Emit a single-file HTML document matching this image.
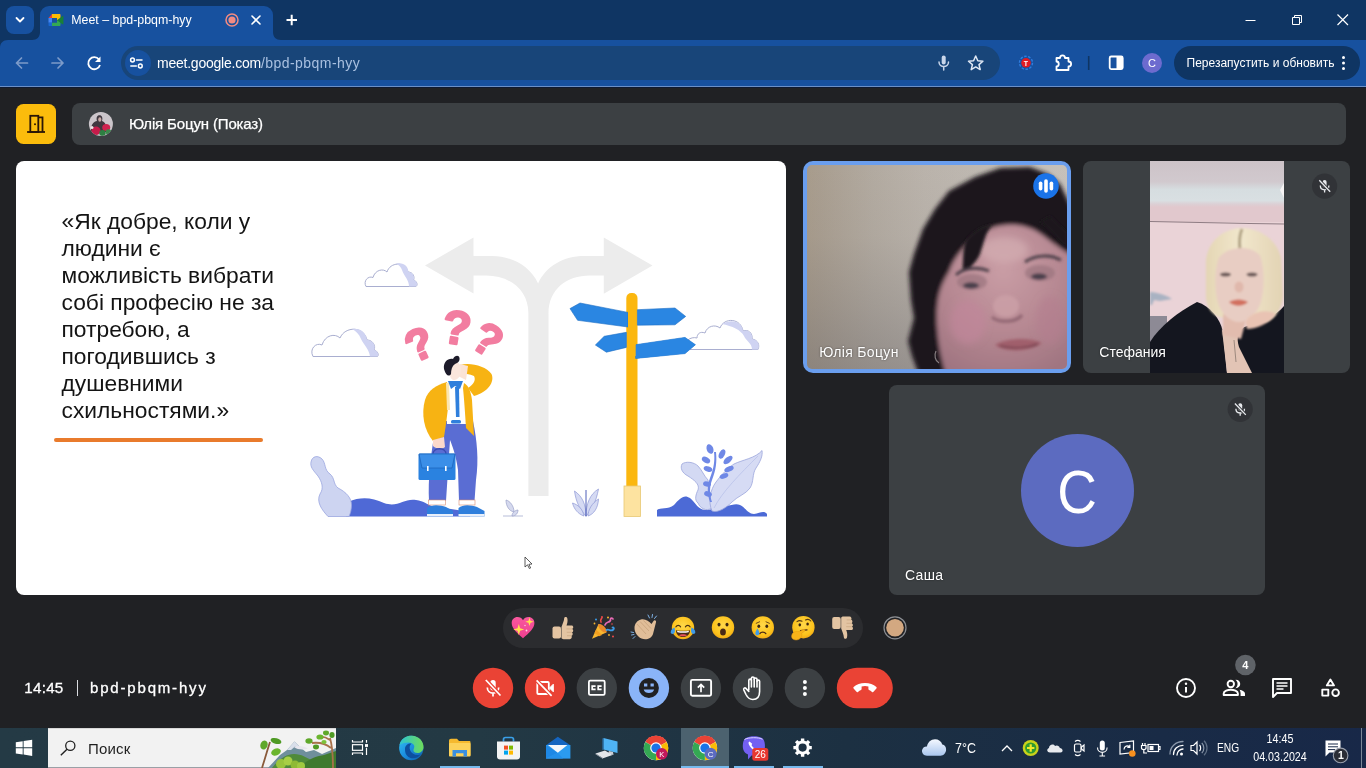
<!DOCTYPE html>
<html lang="uk">
<head>
<meta charset="utf-8">
<title>Meet – bpd-pbqm-hyy</title>
<style>
*{box-sizing:border-box;margin:0;padding:0}
html,body{width:1366px;height:768px;overflow:hidden;background:#202124;font-family:"Liberation Sans","DejaVu Sans",sans-serif;color:#fff}
.abs{position:absolute}
#root{position:relative;width:1366px;height:768px;overflow:hidden;will-change:transform}
/* browser chrome */
#titlebar{left:0;top:0;width:1366px;height:40px;background:#0f3563}
#toolbar{left:0;top:40px;width:1366px;height:46px;background:#17519f;border-radius:0}
#tbline{left:0;top:86px;width:1366px;height:2px;background:linear-gradient(#6c90c6 0,#6c90c6 50%,#0e1a33 50%,#0e1a33 100%)}
#tab{left:40px;top:6px;width:233px;height:34px;background:#17519f;border-radius:9px 9px 0 0}
#tabsearch{left:6px;top:6px;width:28px;height:28px;background:#17519f;border-radius:8px}
#tabtitle{left:71.200px;top:12px;font-size:12.4px;line-height:16px;color:#fff;white-space:nowrap}
#omni{left:121px;top:46px;width:879px;height:34px;border-radius:17px;background:#184579}
#omnichip{left:125px;top:50px;width:26px;height:26px;border-radius:13px;background:#17519f}
#url{left:157px;top:54px;font-size:14px;line-height:18px;color:#fff;white-space:nowrap;letter-spacing:-0.23px}
#url span{color:#a9c0e0;letter-spacing:0.45px}
#relaunch{left:1174px;top:46px;width:186px;height:34px;border-radius:17px;background:#0f3563}
#relaunch span{position:absolute;left:12.500px;top:9px;font-size:12px;line-height:16px;white-space:nowrap;color:#fff}
#avatarC{left:1142px;top:53px;width:20px;height:20px;border-radius:10px;background:#6d6bcf;font-size:11px;line-height:20px;text-align:center;color:#fff}
/* meet */
#leave{left:16px;top:104px;width:40px;height:40px;border-radius:7.5px;background:#fbbc0c}
#pbar{left:72px;top:103px;width:1274px;height:42px;border-radius:8px;background:#3c4043}
#pname{left:129px;top:115px;font-size:15px;line-height:18px;color:#fff;white-space:nowrap;letter-spacing:-0.150px;-webkit-text-stroke:0.250px #fff}
#slide{left:16px;top:161px;width:770px;height:434px;border-radius:8px;background:#fff;overflow:hidden}
#quote{left:45.500px;top:46.600px;width:260px;font-size:22.800px;line-height:27px;color:#141414;white-space:nowrap}
#uline{left:38.400px;top:277.200px;width:208.700px;height:3.600px;border-radius:2px;background:#e97b2c}
.tile{background:#3c4043;border-radius:8px;overflow:hidden}
#t1{left:803px;top:161px;width:268px;height:212px;border:5px solid #6a9eee;border-radius:10px;background:#c9bfae}
#t2{left:1083px;top:161px;width:267px;height:212px}
#t3{left:889px;top:385px;width:376px;height:210px}
.tname{position:absolute;z-index:3;font-size:14px;line-height:18px;color:#fff;white-space:nowrap;text-shadow:0 0 2px rgba(0,0,0,.5)}
#bigC{left:1020.500px;top:434px;width:113px;height:113px;border-radius:56.500px;background:#5c6bc0;color:#fff;font-size:61px;line-height:117px;text-align:center}
#bigC span{display:inline-block;transform:scaleX(0.900)}
.mutebadge{width:26px;height:26px;border-radius:13px;background:#2b2d30}
/* reactions */
#react{left:503px;top:608px;width:360px;height:40px;border-radius:20px;background:#2b2c2f}
/* bottom */
#clock{left:24.300px;top:679.400px;font-size:15.200px;line-height:18px;color:#fff;white-space:nowrap;letter-spacing:0.250px;-webkit-text-stroke:0.300px #fff}
#mcode{left:90px;top:679.200px;font-size:15px;line-height:18px;color:#fff;white-space:nowrap;letter-spacing:1.820px;-webkit-text-stroke:0.300px #fff}
.cb{width:40px;height:40px;border-radius:20px;background:#3c4043}
.cb.red{background:#ea4335}
/* taskbar */
#taskbar{left:0;top:728px;width:1366px;height:40px;background:linear-gradient(90deg,#243a45 0,#233944 35%,#1c3042 62%,#192b46 85%,#182848 100%)}
.tb{color:#fff;white-space:nowrap}
#search{left:48px;top:728px;width:288px;height:40px;background:#f2f2f2;border-top:1px solid #d8d8d8;border-bottom:1px solid #9aa0a6}
#search span{position:absolute;left:40px;top:10.600px;font-size:15px;line-height:18px;color:#1f1f1f;letter-spacing:0.200px}
</style>
</head>
<body>
<div id="root">
  <!-- CHROME -->
  <div id="titlebar" class="abs"></div>
  <div id="toolbar" class="abs"></div>
  <div id="tbline" class="abs"></div>
  <div id="tabsearch" class="abs"></div>
  <div id="tab" class="abs"></div>
  <div id="tabtitle" class="abs">Meet – bpd-pbqm-hyy</div>
  <div id="omni" class="abs"></div>
  <div id="omnichip" class="abs"></div>
  <div id="url" class="abs">meet.google.com<span>/bpd-pbqm-hyy</span></div>
  <div id="avatarC" class="abs">C</div>
  <div id="relaunch" class="abs"><span>Перезапустить и обновить</span></div>
  <svg class="abs" style="left:0;top:0" width="1366" height="88" viewBox="0 0 1366 88">
    <!-- tab outward curves -->
    <path d="M32 40 C37 40 40 37 40 32 L40 40 Z" fill="#17519f"/>
    <path d="M273 32 C273 37 276 40 281 40 L273 40 Z" fill="#17519f"/>
    <!-- toolbar top-left notch -->
    <path d="M0 40 L0 48 C0 43 3 40 8 40 Z" fill="#0f3563"/>
    <!-- tab search chevron -->
    <path d="M16.500 18 L20 21.500 L23.500 18" fill="none" stroke="#fff" stroke-width="1.800" stroke-linecap="round" stroke-linejoin="round"/>
    <!-- meet favicon -->
    <g>
      <path d="M48.500 18 L52 14 L52 18 Z" fill="#ea4335"/>
      <rect x="48.500" y="18" width="3.500" height="4.700" fill="#4285f4"/>
      <path d="M48.500 22.700 L52 22.700 L52 26 L49.500 26 C48.900 26 48.500 25.600 48.500 25 Z" fill="#1967d2"/>
      <path d="M52 14 L59.500 14 C60.100 14 60.500 14.400 60.500 15 L60.500 18.600 L57 21.200 L57 18 L52 18 Z" fill="#fbbc04"/>
      <path d="M52 22.700 L57 22.700 L57 19.800 L60.500 21.600 L60.500 25 C60.500 25.600 60.100 26 59.500 26 L52 26 Z" fill="#34a853"/>
      <path d="M57 20.200 L62.500 15.900 C62.900 15.600 63.400 15.800 63.400 16.300 L63.400 23.900 C63.400 24.400 62.900 24.600 62.500 24.300 Z" fill="#188038"/>
    </g>
    <!-- recording dot -->
    <circle cx="232" cy="20" r="6" fill="none" stroke="#f28b82" stroke-width="1.500"/>
    <circle cx="232" cy="20" r="3.600" fill="#f28b82"/>
    <!-- tab close -->
    <path d="M252 16 L260 24 M260 16 L252 24" stroke="#fff" stroke-width="1.600" stroke-linecap="round"/>
    <!-- new tab -->
    <path d="M286.500 20 L297 20 M291.700 14.700 L291.700 25.300" stroke="#fff" stroke-width="2"/>
    <!-- window controls -->
    <path d="M1245.500 20.500 L1255.500 20.500" stroke="#fff" stroke-width="1"/>
    <path d="M1292.500 17.500 L1299.500 17.500 L1299.500 24.500 L1292.500 24.500 Z M1294.500 17.500 L1294.500 15.500 L1301.500 15.500 L1301.500 22.500 L1299.500 22.500" fill="none" stroke="#fff" stroke-width="1"/>
    <path d="M1337.500 14.500 L1348 25 M1348 14.500 L1337.500 25" stroke="#fff" stroke-width="1.200"/>
    <!-- back / forward -->
    <g fill="none" stroke="#7d9bc9" stroke-width="1.700" stroke-linecap="round" stroke-linejoin="round">
      <path d="M27.500 63 L16.500 63 M21.500 58 L16.500 63 L21.500 68"/>
      <path d="M52 63 L63 63 M58 58 L63 63 L58 68"/>
    </g>
    <!-- reload -->
    <path d="M99 59.500 A6 6 0 1 0 100 65" fill="none" stroke="#fff" stroke-width="1.800"/>
    <path d="M100.500 56.500 L100.500 62 L95 62 Z" fill="#fff"/>
    <!-- tune icon -->
    <g stroke="#fff" stroke-width="1.500" fill="none" stroke-linecap="round">
      <circle cx="132.500" cy="60" r="1.900"/>
      <path d="M136.500 60 L142 60"/>
      <circle cx="140.300" cy="66" r="1.900"/>
      <path d="M130.800 66 L136.300 66"/>
    </g>
    <!-- mic in omnibox -->
    <g fill="none" stroke="#c9d6ea" stroke-width="1.500" stroke-linecap="round">
      <rect x="941.700" y="55.500" width="4" height="9" rx="2" fill="#c9d6ea" stroke="none"/>
      <path d="M939 62 C939 68 948.500 68 948.500 62 M943.700 66.700 L943.700 70"/>
    </g>
    <!-- star -->
    <path d="M975.700 56 L977.800 60.700 L982.900 61.200 L979 64.600 L980.200 69.600 L975.700 66.900 L971.200 69.600 L972.400 64.600 L968.500 61.200 L973.600 60.700 Z" fill="none" stroke="#dfe8f5" stroke-width="1.500" stroke-linejoin="round"/>
    <!-- extension red T -->
    <circle cx="1026" cy="62.800" r="6.500" fill="none" stroke="#2f7de0" stroke-width="1.400" stroke-dasharray="2.500 1.500"/>
    <circle cx="1026" cy="62.800" r="4.800" fill="#e01b24"/>
    <text x="1026" y="65.500" font-size="7" font-weight="700" fill="#fff" text-anchor="middle" font-family="'Liberation Sans',sans-serif">T</text>
    <!-- puzzle -->
    <path d="M1056.500 58 L1060 58 C1060 54.500 1065 54.500 1065 58 L1068.500 58 L1068.500 61.500 C1072 61.500 1072 66.500 1068.500 66.500 L1068.500 70 L1056.500 70 L1056.500 66.500 C1059.500 66.500 1059.500 61.500 1056.500 61.500 Z" fill="none" stroke="#fff" stroke-width="1.800" stroke-linejoin="round"/>
    <!-- separator -->
    <path d="M1088.700 56 L1088.700 70" stroke="#0f3563" stroke-width="1.600"/>
    <!-- side panel -->
    <rect x="1109.700" y="56.500" width="13" height="12.600" rx="1.500" fill="none" stroke="#fff" stroke-width="1.800"/>
    <rect x="1116.500" y="56.500" width="6.200" height="12.600" fill="#fff"/>
    <!-- 3 dots -->
    <circle cx="1343.500" cy="57.500" r="1.500" fill="#fff"/>
    <circle cx="1343.500" cy="63" r="1.500" fill="#fff"/>
    <circle cx="1343.500" cy="68.500" r="1.500" fill="#fff"/>
  </svg>

  <!-- MEET TOP -->
  <div id="leave" class="abs"></div>
  <div id="pbar" class="abs"></div>
  <div id="pname" class="abs">Юлія Боцун (Показ)</div>
  <svg class="abs" style="left:0;top:96px" width="140" height="56" viewBox="0 96 140 56">
    <defs><clipPath id="avc"><circle cx="100.900" cy="124" r="12"/></clipPath>
    <filter id="b1" x="-20%" y="-20%" width="140%" height="140%"><feGaussianBlur stdDeviation="0.700"/></filter></defs>
    <!-- door icon -->
    <g fill="none" stroke="#2b1606" stroke-width="1.800">
      <rect x="30.300" y="115.800" width="8" height="16.200"/>
      <path d="M38.300 117.300 L42.500 117.300 L42.500 132"/>
      <path d="M27.100 132 L45 132"/>
    </g>
    <circle cx="35" cy="124.200" r="1" fill="#2b1606"/>
    <!-- small avatar (abstract photo) -->
    <g clip-path="url(#avc)">
      <rect x="88" y="111" width="26" height="26" fill="#cbc5ca"/>
      <g filter="url(#b1)">
        <path d="M91 130 C91 124 94 121.500 97 121 C96 118 97 115.300 99.500 115.300 C102 115.300 103 118 102 121 C105 122 106 124.500 106 127 L106 132 L91 132 Z" fill="#3f373f"/>
        <ellipse cx="99.800" cy="119.500" rx="1.600" ry="2.200" fill="#c9aaa6"/>
        <ellipse cx="96" cy="130.800" rx="4.600" ry="4.200" fill="#c61f4b"/>
        <ellipse cx="106.200" cy="127.500" rx="4" ry="3.600" fill="#cf2450"/>
        <ellipse cx="102.500" cy="133" rx="3.200" ry="3" fill="#2f7f43"/>
        <ellipse cx="108.500" cy="132" rx="2.800" ry="2.800" fill="#3b8a4c"/>
        <ellipse cx="92" cy="127.500" rx="1.500" ry="1.500" fill="#f1e9ea"/>
      </g>
    </g>
  </svg>

  <!-- SLIDE -->
  <div id="slide" class="abs">
    <div id="quote" class="abs">«Як добре, коли у<br>людини є<br>можливість вибрати<br>собі професію не за<br>потребою, а<br>погодившись з<br>душевними<br>схильностями.»</div>
    <div id="uline" class="abs"></div>
    <svg class="abs" style="left:0;top:0" width="770" height="434" viewBox="16 161 770 434">
      <!-- grey direction arrows -->
      <g fill="#ececec">
        <path d="M425 265.500 L473.500 237.500 L473.500 256 L492 256 C512 256 530 266 538.100 283.400 C546 266 564 256 584 256 L603.800 256 L603.800 237.500 L652.500 265.500 L603.800 293.800 L603.800 275.600 L590 275.600 C566 275.600 548.500 290 548.500 313.300 L548.500 496 L528.400 496 L528.400 313.300 C528.400 290 510 275.600 486 275.600 L473.500 275.600 L473.500 293.500 Z"/>
      </g>
      <!-- clouds -->
      <g fill="#fff" stroke="#a9aed0" stroke-width="1">
        <path d="M366 286.5 C363 281 368 275.5 373 277.5 C375 270 383 268 387 272 C390 262 405 261 408 272 C413 272 415 277 413.5 280 C417 281 418 285 416 286.5 Z"/>
        <path d="M313 356.500 C309 349 316 342 322 345 C325 335 335 333 340 338 C345 326 364 326 367 340 C373 340 376 346 374 350 C378 351 379 355 377.500 356.500 Z"/>
        <path d="M690 349.500 L700 349.500 L758 349.500 C760 345 758 340 752 339 C753 333 748 329 743 331 C741 318 724 317 720 328 C715 324 707 326 705 333 C700 331 697 334 697 338 C694 337 690 338 688 340"/>
      </g>
      <g fill="#cfd3f2" stroke="none">
        <path d="M396 263.500 C404 262 408 266 408.500 272 C413 272 415 277 413.500 280 C417 281 418 285 416 286.500 L409 286.500 C409 280 404 276 402 270 C401 267 399 265 396 263.500 Z"/>
        <path d="M352 329 C361 328 366 333 367 340 C373 340 376 346 374 350 C378 351 379 355 377.500 356.500 L370 356.500 C369 349 364 345 361 339 C359 334 356 331 352 329 Z"/>
        <path d="M722 324 C732 318 742 322 743 331 C748 329 753 333 752 339 C758 340 760 345 758 349.500 L752 349.500 C752 343 746 341 744 336 C741 330 732 326 722 324 Z"/>
      </g>
      <!-- question marks -->
      <g fill="#f27da0" stroke="#f27da0" stroke-width="2.200" stroke-linejoin="round" font-family="'Liberation Sans','DejaVu Sans',sans-serif" font-weight="700" font-size="44" text-anchor="middle">
        <text transform="translate(419 343.500) rotate(-24)" x="0" y="15.800">?</text>
        <text transform="translate(456.800 327) rotate(9)" x="0" y="17" font-size="47">?</text>
        <text transform="translate(488 339) rotate(32)" x="0" y="15.800">?</text>
      </g>
      <!-- left leaf + ground -->
      <path d="M348 502 C362 496 372 498 384 503 C398 508 404 498 416 500 C424 501 428 505 432 506 L470 512 L470 516.500 L346 516.500 Z" fill="#4f69d6"/>
      <path d="M311 462 C312 456 318 455 322 459 C326 463 324 470 330 474 C335 478 333 484 338 488 C346 492 352 498 351.500 506 C351 512 350 514 349 516.500 L328 516.500 C322 510 316 502 320 494 C324 488 322 482 318 476 C313 470 310 467 311 462 Z" fill="#cdd4f1" stroke="#9aa6e0" stroke-width="0.8"/>
      <!-- man -->
      <g>
        <!-- pants -->
        <path d="M437 421 L473 421 C477 440 479 460 476 480 L474.500 501 L459 501 L458 470 C456 455 452 445 450 440 L446 501 L429 501 C428 480 430 455 437 421 Z" fill="#5a6dd3"/>
        <!-- socks -->
        <rect x="428.500" y="500" width="17" height="5" fill="#fff" stroke="#d98c70" stroke-width="0.6"/>
        <rect x="459" y="500" width="16" height="5" fill="#fff" stroke="#d98c70" stroke-width="0.6"/>
        <!-- shoes -->
        <path d="M427 516.500 L427 508 C432 504 440 505 446 507 L453 511 L453 516.500 Z" fill="#2f7fdc"/>
        <path d="M458.500 516.500 L458.500 508 C463 504 471 505 477 507 L484.500 511 L484.500 516.500 Z" fill="#2f7fdc"/>
        <rect x="427" y="514" width="26" height="2.500" fill="#e9f0fb"/>
        <rect x="458.500" y="514" width="26" height="2.500" fill="#e9f0fb"/>
        <!-- shirt -->
        <path d="M446 382 L465 382 L466 424 L447 424 Z" fill="#fff"/>
        <!-- raised arm -->
        <path d="M460 365 C470 362 486 366 491.500 374 C495 382 488 392 474 396 L468 388 C474 384 476 380 474 376 C470 374 464 374 460 372 Z" fill="#f7b313"/>
        <path d="M460 364 L468 366 L466 380 L458 376 Z" fill="#fbe3d6"/>
        <!-- jacket left -->
        <path d="M447 382 C436 385 428 390 425 400 C421 414 424 430 433 441 L444 437 C446 425 448 410 449 396 Z" fill="#f7b313"/>
        <path d="M464 383 C469 386 471 392 472 400 L474 436 L466 428 C465 412 464 398 463 388 Z" fill="#f7b313"/>
        <path d="M446 383 L449 383 L450 410 L447 410 Z" fill="#fbe6b0"/>
        <!-- collar + tie -->
        <path d="M448 381 L463 381 L460 389 L455 386 L451 389 Z" fill="#2f7fdc"/>
        <path d="M455 387 L459 387 L459.500 417 L456 417 Z" fill="#2f7fdc"/>
        <rect x="451" y="420" width="10" height="3.500" rx="1.500" fill="#2f7fdc"/>
        <!-- head -->
        <path d="M450 363 C456 360 461 363 461 369 C461 376 458 380 454 380 C450 380 448 373 450 363 Z" fill="#fbe6dc"/>
        <path d="M444 369 C443 362 448 358 453 359 C455 355 459 355 459.500 358 C460 361 458 363 455 364 C452 366 451 370 451 374 C449 377 446 376 444 369 Z" fill="#1d1b2a"/>
        <!-- hand -->
        <path d="M433 440 L444 437 L445 447 C442 450 436 449 433 446 Z" fill="#fbd9cb"/>
        <!-- briefcase -->
        <path d="M433 454 C433 447 446 447 446 454" fill="none" stroke="#3b4bb0" stroke-width="1.500"/>
        <rect x="418.500" y="453.500" width="37" height="26.500" rx="1.500" fill="#2a82e0"/>
        <path d="M419 454 L455 454 L452 468 L422 468 Z" fill="#3b8fe8" stroke="#1b62b8" stroke-width="0.700"/>
        <rect x="427" y="466" width="1.600" height="5" fill="#fff"/>
        <rect x="445" y="466" width="1.600" height="5" fill="#fff"/>
      </g>
      <!-- small plant -->
      <g fill="#d5d9ee" stroke="#9aa0c8" stroke-width="0.700">
        <path d="M506 500 C510 501 514 506 514 512 C509 511 506 506 506 500 Z"/>
        <path d="M503 516 L523 516"/>
        <path d="M512 516 C512 512 516 510 518 510 C518 513 516 516 512 516 Z"/>
      </g>
      <!-- center plant -->
      <g fill="#d5daf3" stroke="#8e98d6" stroke-width="0.700">
        <path d="M586 516 C580 510 576 502 574.500 491 C582 496 586 504 586 516 Z"/>
        <path d="M586 516 C592 510 596 502 598.500 489 C590 494 586 504 586 516 Z"/>
        <path d="M584 516 C578 514 574 509 572.500 503 C579 505 583 510 584 516 Z"/>
        <path d="M588 516 C594 514 598 508 598.500 499 C592 503 588 510 588 516 Z"/>
        <path d="M586 516.500 L586 490" stroke="#4f5fb8" stroke-width="1"/>
      </g>
      <!-- sign post -->
      <rect x="626.300" y="293" width="11.200" height="200" rx="5" fill="#fbb70f"/>
      <rect x="624" y="486" width="16.500" height="30.500" fill="#fde3a0" stroke="#e8c873" stroke-width="0.800"/>
      <g fill="#2a86e2" stroke="#1f6fc4" stroke-width="0.600">
        <path d="M570 308.600 L580 303 L628 312.400 L628 327 L577.600 320.300 Z"/>
        <path d="M637.400 309.700 L675 308 L685.700 316.400 L675 324.800 L637.400 325.200 Z"/>
        <path d="M595.400 345 L604.200 336.300 L626.400 332.300 L626.400 347.400 L606.400 352.200 Z"/>
        <path d="M635.700 344.700 L685 337.400 L695.400 344.700 L685 353.600 L635.700 358.400 Z"/>
      </g>
      <rect x="628" y="296" width="8" height="60" fill="#fbb70f"/>
      <path d="M635.700 344.700 L685 337.400 L695.400 344.700 L685 353.600 L635.700 358.400 Z" fill="#2a86e2"/>
      <!-- right plants -->
      <path d="M657 516.500 L657 510 C660 507 668 510 674 505 C680 498 684 494 690 498 C696 503 698 510 706 510 C712 510 718 506 726 506 C732 505 736 503 740 505 C746 508 748 514 754 514 C760 513 764 510 767 514 L767 516.500 Z" fill="#4c6ad6"/>
      <path d="M682 464 C686 461 694 462 698 466 C702 470 704 476 708 480 L712 508 C706 512 700 508 698 503 C694 500 696 494 698 490 C700 484 694 480 688 476 C682 473 680 468 682 464 Z" fill="#d3d9f3" stroke="#9ca6dc" stroke-width="0.800"/>
      <path d="M762 450.500 C763 456 760 462 756 468 C752 474 754 482 750 488 C746 494 738 496 732 502 C726 508 718 513 712 511 C708 502 710 490 716 482 C722 474 728 468 734 464 C742 460 756 458 762 450.500 Z" fill="#d6dbf4" stroke="#9ca6dc" stroke-width="0.800"/>
      <path d="M714 508 C722 492 740 474 758 456" fill="none" stroke="#b9c1ea" stroke-width="0.800"/>
      <g fill="#6f88e6">
        <ellipse cx="710" cy="449" rx="3.300" ry="5" transform="rotate(-20 710 449)"/>
        <ellipse cx="722" cy="454" rx="2.800" ry="5" transform="rotate(25 722 454)"/>
        <ellipse cx="728" cy="460" rx="2.800" ry="5.500" transform="rotate(50 728 460)"/>
        <ellipse cx="706" cy="460" rx="2.800" ry="4.500" transform="rotate(-60 706 460)"/>
        <ellipse cx="729" cy="469" rx="2.600" ry="5" transform="rotate(65 729 469)"/>
        <ellipse cx="708" cy="469" rx="2.600" ry="4.500" transform="rotate(-70 708 469)"/>
        <ellipse cx="724" cy="476" rx="2.400" ry="4.500" transform="rotate(70 724 476)"/>
        <ellipse cx="707" cy="484" rx="2.600" ry="4" transform="rotate(-75 707 484)"/>
        <ellipse cx="708" cy="494" rx="2.600" ry="4" transform="rotate(-70 708 494)"/>
        <path d="M716 452 C717 462 716 470 712 480 C709 488 710 496 712 502 L710 502 C707 494 707 486 710 478 C714 468 715 460 714 452 Z"/>
      </g>
      <!-- cursor -->
      <path d="M525 557 L525 567 L527.500 564.800 L529.300 568.500 L530.600 568 L528.900 564.300 L532 564 Z" fill="#fff" stroke="#333" stroke-width="0.800"/>
    </svg>
  </div>

  <!-- TILES -->
  <div id="t1" class="abs tile"></div>
  <div id="t2" class="abs tile"></div>
  <div id="t3" class="abs tile"></div>
  <div id="bigC" class="abs"><span>C</span></div>

  <svg class="abs" style="left:800px;top:158px" width="560" height="440" viewBox="800 158 560 440">
    <defs>
      <clipPath id="c1"><rect x="807" y="165" width="260" height="204" rx="5"/></clipPath>
      <clipPath id="c2"><rect x="1150" y="161" width="134" height="212"/></clipPath>
      <filter id="bl2" x="-10%" y="-10%" width="120%" height="120%"><feGaussianBlur stdDeviation="2"/></filter>
      <filter id="bl3" x="-20%" y="-20%" width="140%" height="140%"><feGaussianBlur stdDeviation="3.500"/></filter>
      <filter id="bl15" x="-10%" y="-10%" width="120%" height="120%"><feGaussianBlur stdDeviation="1.700"/></filter>
      <filter id="bl1" x="-10%" y="-10%" width="120%" height="120%"><feGaussianBlur stdDeviation="1.100"/></filter>
      <linearGradient id="wall1" x1="0" y1="0" x2="1" y2="0"><stop offset="0" stop-color="#a89c8c"/><stop offset="0.050" stop-color="#a99e90"/><stop offset="0.250" stop-color="#b2aaa0"/><stop offset="0.450" stop-color="#bab3ab"/><stop offset="1" stop-color="#c6c1bb"/></linearGradient>
      <linearGradient id="wall1b" x1="0" y1="0" x2="0" y2="1"><stop offset="0" stop-color="#5c5a60" stop-opacity="0"/><stop offset="0.350" stop-color="#5c5a60" stop-opacity="0.040"/><stop offset="0.700" stop-color="#5c5a60" stop-opacity="0.200"/><stop offset="1" stop-color="#5c5a60" stop-opacity="0.360"/></linearGradient>
      <radialGradient id="skin1" cx="0.480" cy="0.300" r="0.750"><stop offset="0" stop-color="#c99da5"/><stop offset="0.550" stop-color="#b68892"/><stop offset="1" stop-color="#a07581"/></radialGradient>
      <linearGradient id="ceil2" x1="0" y1="0" x2="0" y2="1"><stop offset="0" stop-color="#cdc3c8"/><stop offset="0.450" stop-color="#d1c9ce"/><stop offset="0.620" stop-color="#d6dde0"/><stop offset="0.860" stop-color="#d9dfe2"/><stop offset="0.940" stop-color="#dccfd4"/><stop offset="1" stop-color="#e1c8cd"/></linearGradient>
      <linearGradient id="hair2" x1="0" y1="0" x2="1" y2="0"><stop offset="0" stop-color="#e4d6b4"/><stop offset="0.450" stop-color="#f1e7cc"/><stop offset="1" stop-color="#e2d3b3"/></linearGradient>
    </defs>
    <!-- tile 1: webcam frame (abstract colour regions) -->
    <g clip-path="url(#c1)">
      <rect x="807" y="165" width="260" height="204" fill="url(#wall1)"/>
      <rect x="807" y="165" width="260" height="204" fill="url(#wall1b)"/>
      <g filter="url(#bl2)">
        <path d="M1075 215 L1060 184 L1048 174 L1030 167 L1000 168 L975 177 L949 191 L935 209 L923 229 L914 254 L909 272 L911 300 L914 318 L908 341 L912 356 L919 375 L1075 375 Z" fill="#1b191d"/>
        <path d="M949 272 C955 255 968 241 985 231 C1000 223 1018 223 1032 229 C1045 235 1055 247 1075 257 L1075 375 L946 375 C938 350 935 320 938 300 C940 288 944 280 949 272 Z" fill="url(#skin1)"/>
      </g>
      <g filter="url(#bl3)">
        <ellipse cx="1004" cy="250" rx="24" ry="13" fill="#d4aeb2" opacity="0.700"/>
        <ellipse cx="968" cy="322" rx="18" ry="22" fill="#c0869a" opacity="0.700"/>
        <ellipse cx="1050" cy="320" rx="14" ry="24" fill="#b47e90" opacity="0.600"/>
      </g>
      <g filter="url(#bl15)">
        <path d="M966 240 C972 232 982 226 992 224 C986 232 984 242 980 254 C976 263 970 268 962 272 C964 262 962 250 966 240 Z" fill="#1b191d"/>
        <path d="M1040 222 C1050 228 1058 240 1067 248 L1067 232 L1050 216 Z" fill="#1b191d"/>
        <ellipse cx="972" cy="282" rx="15" ry="8" fill="#9a747e" opacity="0.700"/>
        <ellipse cx="1040" cy="273" rx="15" ry="8" fill="#9a747e" opacity="0.700"/>
        <path d="M956 275 C963 268 978 266 989 271" fill="none" stroke="#4a3c46" stroke-width="3"/>
        <path d="M1025 262 C1035 255 1050 254 1061 260" fill="none" stroke="#4a3c46" stroke-width="3"/>
        <ellipse cx="971" cy="285.500" rx="8" ry="3" fill="#463c4a"/>
        <ellipse cx="1039" cy="276.500" rx="8" ry="3" fill="#463c4a"/>
        <ellipse cx="1006" cy="306" rx="13" ry="11" fill="#cca0a8" opacity="0.800"/>
        <path d="M992 317 C998 323 1016 323 1022 315" fill="none" stroke="#8e6470" stroke-width="3"/>
        <path d="M995 345 C1006 338 1030 337 1042 343 C1030 352 1006 353 995 345 Z" fill="#a05f6c"/>
        <path d="M1000 346 C1012 349 1028 348 1038 344" fill="none" stroke="#6e3c4a" stroke-width="1.500"/>
      </g>
      <path d="M936 351 C934 355 935 361 939 363" fill="none" stroke="#d8d0cf" stroke-width="1.200" opacity="0.550"/>
    </g>
    <!-- speaking indicator -->
    <circle cx="1046" cy="186" r="12.800" fill="#1a73e8"/>
    <rect x="1038.800" y="181.500" width="3.600" height="9" rx="1.800" fill="#fff"/>
    <rect x="1044.200" y="179.200" width="3.600" height="13.600" rx="1.800" fill="#fff"/>
    <rect x="1049.600" y="181.500" width="3.600" height="9" rx="1.800" fill="#fff"/>
    <!-- tile 2: portrait webcam frame (abstract colour regions) -->
    <g clip-path="url(#c2)">
      <rect x="1150" y="161" width="134" height="212" fill="#ead3d7"/>
      <rect x="1150" y="205" width="134" height="17" fill="#e1c8cd"/>
      <rect x="1150" y="161" width="134" height="46" fill="url(#ceil2)"/>
      <path d="M1150 221.500 L1250 223.500 L1284 224" stroke="#8f7d84" stroke-width="1.200" fill="none"/>
      <path d="M1280 190 L1284 183 L1284 198 Z" fill="#f6f3f4"/>
      <path d="M1150 292 C1158 292.500 1166 295 1172 299 L1160 301 L1154 300 L1152 305 L1150 305 Z" fill="#a9b2c2" filter="url(#bl1)"/>
      <rect x="1150" y="316" width="17" height="30" fill="#8d8a95"/>
      <path d="M1150 342 C1160 326 1178 312 1197 302 C1210 306 1220 318 1223 332 L1227 373 L1150 373 Z" fill="#14161f"/>
      <path d="M1222 330 L1242 336 L1254 373 L1227 373 Z" fill="#e2c4b5"/>
      <path d="M1284 306 C1277 315 1262 322 1247 326 C1238 329 1236 337 1239 347 L1252 373 L1284 373 Z" fill="#14161f"/>
      <g filter="url(#bl1)">
        <path d="M1241 228 C1222 229 1208 242 1206 260 L1206 298 C1207 308 1212 314 1219 317 L1266 322 C1276 318 1282 308 1283 296 L1281 258 C1277 240 1260 228 1241 228 Z" fill="url(#hair2)"/>
        <path d="M1242 229 C1239 236 1239 242 1240 250" stroke="#8d7c5c" stroke-width="3" fill="none" opacity="0.650"/>
        <path d="M1223 314 L1246 320 L1241 339 L1223 335 Z" fill="#e2bcae"/>
        <path d="M1221 258 C1228 246 1250 244 1258 256 C1262 270 1262 290 1258 304 C1254 316 1246 322 1239 322 C1231 322 1223 314 1220 302 C1217 288 1217 270 1221 258 Z" fill="#e8cdc3" transform="translate(1239 285) scale(1.120 1) translate(-1239 -285)"/>
        <ellipse cx="1225.500" cy="274.500" rx="5.500" ry="2.100" fill="#6b5856"/>
        <ellipse cx="1252" cy="274.500" rx="5.500" ry="2.100" fill="#6b5856"/>
        <ellipse cx="1239" cy="287" rx="4.500" ry="5.500" fill="#e0b8ac"/>
        <path d="M1229 302 C1234 298.500 1243 298.500 1248 302 C1243 307 1234 307 1229 302 Z" fill="#d2705e"/>
      </g>
      <path d="M1245 322 C1250 312 1266 308 1276 314 C1270 323 1256 329 1247 329 Z" fill="#e9c3b3" filter="url(#bl1)"/>
      <path d="M1234 340 L1236 362" stroke="#8a7a70" stroke-width="0.800"/>
    </g>
    <!-- mute badges -->
    <g id="mb" transform="translate(-0.400 0.600)">
      <circle cx="1325" cy="185.500" r="12.600" fill="#313337"/>
      <rect x="1323" y="179.500" width="4" height="7.500" rx="2" fill="#e8eaed"/>
      <path d="M1320.700 185 C1320.700 190.600 1329.300 190.600 1329.300 185 M1325 189.300 L1325 192" fill="none" stroke="#e8eaed" stroke-width="1.300"/>
      <path d="M1319.300 179.300 L1331 191.500" stroke="#313337" stroke-width="3"/>
      <path d="M1319.700 179.700 L1330.600 191.100" stroke="#e8eaed" stroke-width="1.300"/>
    </g>
    <use href="#mb" x="-84.400" y="223.200"/>
  </svg>
  <div class="tname" style="left:819.300px;top:342.850px;letter-spacing:0.350px">Юлія Боцун</div>
  <div class="tname" style="left:1099.300px;top:342.850px">Стефания</div>
  <div class="tname" style="left:905px;top:566.200px;letter-spacing:0.300px">Саша</div>
  <!-- REACTIONS -->
  <div id="react" class="abs"></div>
  <svg class="abs" style="left:500px;top:606px" width="420" height="44" viewBox="500 606 420 44">
    <defs>
      <radialGradient id="fy" cx="50%" cy="40%" r="60%"><stop offset="0" stop-color="#ffd84a"/><stop offset="0.750" stop-color="#fcc21b"/><stop offset="1" stop-color="#f0a818"/></radialGradient>
      <linearGradient id="hp" x1="0" y1="0" x2="0" y2="1"><stop offset="0" stop-color="#f9589e"/><stop offset="1" stop-color="#ee3f8f"/></linearGradient>
    </defs>
    <!-- 1 sparkling heart -->
    <g>
      <path d="M523 638.200 C517 633 511.700 628.500 511.700 623 C511.700 619.500 514.300 617 517.500 617 C519.800 617 521.900 618.200 523 620.200 C524.100 618.200 526.200 617 528.500 617 C531.700 617 534.400 619.500 534.400 623 C534.400 628.500 529 633 523 638.200 Z" fill="url(#hp)"/>
      <path d="M529.500 617.500 L530.500 620.800 L533.800 621.800 L530.500 622.800 L529.500 626.100 L528.500 622.800 L525.200 621.800 L528.500 620.800 Z" fill="#ffe14d"/>
      <path d="M518.800 624 L520.100 628.200 L524.300 629.500 L520.100 630.800 L518.800 635 L517.500 630.800 L513.300 629.500 L517.500 628.200 Z" fill="#ffe14d"/>
      <circle cx="526.500" cy="630.500" r="0.900" fill="#ffd0e6"/><circle cx="525" cy="625.500" r="0.700" fill="#ffd0e6"/>
    </g>
    <!-- 2 thumbs up -->
    <g fill="#e3c4a2">
      <path d="M561.500 627 C562.500 624 564 621 564.200 618.200 C564.300 616.600 566.800 616.300 567.300 618.200 C568 621 567.200 623.500 566.500 625.500 L571.500 625.500 C573.600 625.500 573.900 628.300 572.200 628.900 C573.700 629.500 573.500 632 572 632.400 C573.200 633.200 572.900 635.400 571.500 635.800 C572.300 637 571.500 639.200 569.800 639.200 L563.500 639.200 C562.500 639.200 561.800 638.600 561.500 638 Z"/>
      <rect x="552.500" y="626.500" width="8.500" height="12" rx="2"/>
      <path d="M566.500 628.900 L572 628.900 M566.800 632.300 L571.800 632.300 M567 635.700 L571.200 635.700" stroke="#c9a680" stroke-width="0.700" fill="none"/>
    </g>
    <!-- 3 party popper -->
    <g>
      <path d="M592 638.800 L598.500 624 C601 624.500 605.500 629 606.500 632.500 Z" fill="#f7b731"/>
      <path d="M594.500 633 L596 629.600 L602 635 L599 636.200 Z" fill="#f29f1f"/>
      <ellipse cx="602.500" cy="628.200" rx="5.600" ry="2.400" transform="rotate(45 602.500 628.200)" fill="#e98a2a"/>
      <path d="M601 622 C599 619.500 603 618.500 602 616.800" fill="none" stroke="#ef4b4b" stroke-width="1.700" stroke-linecap="round"/>
      <path d="M605 625 C606 621 611 623 610.500 619.500 C610.200 617.800 612.500 617.500 613 619" fill="none" stroke="#e86bb5" stroke-width="1.700" stroke-linecap="round"/>
      <path d="M606.500 630 C609 628 610 632.500 613.500 629.500 C614.500 628.600 613.500 627 612.500 627.500" fill="none" stroke="#3b9be8" stroke-width="1.700" stroke-linecap="round"/>
      <circle cx="596" cy="619.500" r="1" fill="#3b9be8"/><circle cx="608" cy="617.500" r="1" fill="#f7b731"/>
      <circle cx="613" cy="636.500" r="1" fill="#ef4b4b"/><circle cx="609" cy="635" r="0.900" fill="#f7b731"/>
      <circle cx="594.500" cy="623.500" r="0.900" fill="#f7b731"/><circle cx="612" cy="624" r="0.800" fill="#ef4b4b"/>
    </g>
    <!-- 4 clap -->
    <g>
      <path d="M634.500 628 C634.500 624 637 620.500 641 619.500 C645 618.500 649 621 651.500 624 L653.500 621 C654.500 619.500 656.500 620.500 656 622.200 L653 634 C651.500 638.500 646 640.500 641.500 638.500 C637 636.500 634.500 632 634.500 628 Z" fill="#e0bd98"/>
      <path d="M637 624 L646 634 M640 621.500 L649 631 M643.500 620.500 L651 628.500" stroke="#c39d77" stroke-width="0.700" fill="none"/>
      <path d="M649.500 618 L648 615 M652 617.500 L652.500 614.500 M654.500 618.500 L656.500 616" stroke="#7fb2e6" stroke-width="1" stroke-linecap="round"/>
      <path d="M634 634.500 L631.500 635 M635 636.500 L633 638.500 M633.500 632.500 L631 632" stroke="#7fb2e6" stroke-width="1" stroke-linecap="round"/>
    </g>
    <!-- 5 joy -->
    <g>
      <circle cx="683" cy="628" r="11.200" fill="url(#fy)"/>
      <path d="M676 626.800 C677 624.800 679.500 624.800 680.500 626.800 M685.500 626.800 C686.500 624.800 689 624.800 690 626.800" fill="none" stroke="#4a3212" stroke-width="1.300" stroke-linecap="round"/>
      <path d="M676 630.200 C678 630.900 688 630.900 690 630.200 C690 634.500 687 637 683 637 C679 637 676 634.500 676 630.200 Z" fill="#4a2a16"/>
      <path d="M677 630.800 C680 631.500 686 631.500 689 630.800 L688.600 632.300 C685 633 681 633 677.400 632.300 Z" fill="#fff"/>
      <path d="M679 635.200 C681 634 685 634 687 635.200 C685.500 636.600 680.500 636.600 679 635.200 Z" fill="#e8505b"/>
      <path d="M674.500 627.500 C672.500 628.200 670.500 630.200 670.700 632.500 C671 634.500 673.800 634.400 674.600 632.500 C675.200 631 675 629 674.500 627.500 Z" fill="#3f9be8"/>
      <path d="M691.500 627.500 C693.500 628.200 695.500 630.200 695.300 632.500 C695 634.500 692.200 634.400 691.400 632.500 C690.800 631 691 629 691.500 627.500 Z" fill="#3f9be8"/>
    </g>
    <!-- 6 open mouth -->
    <g>
      <circle cx="723" cy="627.400" r="11.200" fill="url(#fy)"/>
      <ellipse cx="719" cy="624.600" rx="1.500" ry="1.900" fill="#3a2510"/>
      <ellipse cx="727" cy="624.600" rx="1.500" ry="1.900" fill="#3a2510"/>
      <ellipse cx="723" cy="632" rx="2.900" ry="3.500" fill="#4a2a16"/>
    </g>
    <!-- 7 cry -->
    <g>
      <circle cx="762.800" cy="627.400" r="11.200" fill="url(#fy)"/>
      <ellipse cx="758.800" cy="626.200" rx="1.400" ry="1.700" fill="#3a2510"/>
      <ellipse cx="766.800" cy="626.200" rx="1.400" ry="1.700" fill="#3a2510"/>
      <path d="M756.200 623.300 L759.600 621.800 M769.400 623.300 L766 621.800" stroke="#6a4a1a" stroke-width="1" stroke-linecap="round"/>
      <path d="M759.800 633.600 C761 631.600 764.600 631.600 765.800 633.600" fill="none" stroke="#4a2a16" stroke-width="1.300" stroke-linecap="round"/>
      <path d="M757.500 628.500 C759 631 760 633 759 634.500 C758 636 755.500 635.500 755.300 633.500 C755.200 631.800 756.500 630 757.500 628.500 Z" fill="#3f9be8"/>
    </g>
    <!-- 8 think -->
    <g>
      <circle cx="803.400" cy="627.200" r="11.200" fill="url(#fy)"/>
      <ellipse cx="799.800" cy="624.800" rx="1.300" ry="1.600" fill="#3a2510"/>
      <ellipse cx="807.600" cy="624" rx="1.300" ry="1.600" fill="#3a2510"/>
      <path d="M797 621.600 C798.500 620.400 800.500 620.400 802 621.200 M805.500 620 C807 619.200 809.500 619.500 810.800 621" fill="none" stroke="#5a3c14" stroke-width="1.100" stroke-linecap="round"/>
      <path d="M800.500 630.600 L807 629.800" stroke="#4a2a16" stroke-width="1.300" stroke-linecap="round"/>
      <path d="M792.500 633.500 C794 631.500 797 631 799.500 631.500 L803.500 629.500 C804.800 629 805.500 630.600 804.400 631.400 L801.500 633.300 C802.500 635 801.500 638 799 639.300 C796.500 640.500 793.500 640 792.300 638.500 C791.200 637 791.500 635 792.500 633.500 Z" fill="#f8b319" stroke="#e39a10" stroke-width="0.500"/>
    </g>
    <!-- 9 thumbs down -->
    <g fill="#e3c4a2" transform="translate(279.700 1255.600) scale(1 -1)">
      <path d="M561.500 627 C562.500 624 564 621 564.200 618.200 C564.300 616.600 566.800 616.300 567.300 618.200 C568 621 567.200 623.500 566.500 625.500 L571.500 625.500 C573.600 625.500 573.900 628.300 572.200 628.900 C573.700 629.500 573.500 632 572 632.400 C573.200 633.200 572.900 635.400 571.500 635.800 C572.300 637 571.500 639.200 569.800 639.200 L563.500 639.200 C562.500 639.200 561.800 638.600 561.500 638 Z"/>
      <rect x="552.500" y="626.500" width="8.500" height="12" rx="2"/>
      <path d="M566.500 628.900 L572 628.900 M566.800 632.300 L571.800 632.300 M567 635.700 L571.200 635.700" stroke="#c9a680" stroke-width="0.700" fill="none"/>
    </g>
    <!-- skin tone -->
    <circle cx="895" cy="627.800" r="11" fill="none" stroke="#8d9095" stroke-width="1.200"/>
    <circle cx="895" cy="627.800" r="8.800" fill="#d3a881"/>
  </svg>

  <!-- BOTTOM BAR -->
  <div id="clock" class="abs">14:45</div><div class="abs" style="left:77px;top:680px;width:1px;height:15.500px;background:#dadce0"></div><div id="mcode" class="abs">bpd-pbqm-hyy</div>
  <svg class="abs" style="left:460px;top:654px" width="906" height="66" viewBox="460 654 906 66">
    <!-- buttons -->
    <circle cx="493" cy="688" r="20.200" fill="#ea4335"/>
    <circle cx="545" cy="688" r="20.200" fill="#ea4335"/>
    <circle cx="596.800" cy="688" r="20.200" fill="#3c4043"/>
    <circle cx="648.900" cy="688" r="20.200" fill="#8ab4f8"/>
    <circle cx="700.900" cy="688" r="20.200" fill="#3c4043"/>
    <circle cx="752.900" cy="688" r="20.200" fill="#3c4043"/>
    <circle cx="804.900" cy="688" r="20.200" fill="#3c4043"/>
    <rect x="836.800" y="667.800" width="56" height="40.400" rx="20.200" fill="#ea4335"/>
    <!-- mic off -->
    <g>
      <rect x="490.300" y="680" width="5.400" height="10.500" rx="2.700" fill="#fff"/>
      <path d="M487.300 687.500 C487.300 695 498.700 695 498.700 687.500 M493 693 L493 696.500" fill="none" stroke="#fff" stroke-width="1.700"/>
      <path d="M485.200 679.500 L501 696" stroke="#ea4335" stroke-width="4"/>
      <path d="M485.800 680 L500.500 695.500" stroke="#fff" stroke-width="1.700"/>
    </g>
    <!-- cam off -->
    <g>
      <rect x="537.300" y="682" width="11.500" height="12" rx="1" fill="none" stroke="#fff" stroke-width="1.800"/>
      <path d="M549.500 688 L553.300 684.200 L553.300 691.800 Z" fill="#fff" stroke="#fff" stroke-width="1" stroke-linejoin="round"/>
      <path d="M536 679.800 L552 696.200" stroke="#ea4335" stroke-width="4"/>
      <path d="M536.600 680.300 L551.600 695.800" stroke="#fff" stroke-width="1.700"/>
    </g>
    <!-- cc -->
    <g fill="none" stroke="#fff">
      <rect x="588.900" y="680.600" width="15.800" height="14.200" rx="1.300" stroke-width="1.800"/>
      <path d="M595.600 686.200 L592.200 686.200 L592.200 689.400 L595.600 689.400 M601.600 686.200 L598.200 686.200 L598.200 689.400 L601.600 689.400" stroke-width="1.700"/>
    </g>
    <!-- emoji -->
    <g>
      <circle cx="648.900" cy="688" r="10" fill="#202124"/>
      <rect x="644" y="683.500" width="3.300" height="3" fill="#8ab4f8"/>
      <rect x="650.500" y="683.500" width="3.300" height="3" fill="#8ab4f8"/>
      <path d="M643.700 689.600 L654.100 689.600 C653.300 694.300 644.500 694.300 643.700 689.600 Z" fill="#8ab4f8"/>
    </g>
    <!-- present -->
    <g fill="none" stroke="#fff" stroke-width="1.900">
      <rect x="690.900" y="679.900" width="20.200" height="15.900" rx="1.500"/>
      <path d="M701 692.300 L701 685 M697.800 687.700 L701 684.500 L704.200 687.700" stroke-width="1.700"/>
    </g>
    <!-- hand -->
    <g fill="none" stroke="#fff" stroke-width="1.600" stroke-linejoin="round" stroke-linecap="round">
      <path d="M748.800 690 L748.800 680.500 C748.800 678.700 751.400 678.700 751.400 680.500 L751.400 678.300 C751.400 676.500 754.200 676.500 754.200 678.300 L754.200 679.300 C754.200 677.500 757 677.500 757 679.300 L757 681.300 C757 679.700 759.600 679.700 759.600 681.300 L759.600 691.500 C759.600 696.500 757 699.500 752.800 699.500 C749.500 699.500 747.500 697.500 746 694.500 L743.800 689.800 C743.200 688.400 744.800 687.300 745.900 688.400 L748.800 691.500"/>
      <path d="M751.400 680.500 L751.400 687 M754.200 679 L754.200 687 M757 681 L757 687"/>
    </g>
    <!-- more -->
    <circle cx="804.900" cy="682" r="2" fill="#fff"/><circle cx="804.900" cy="688" r="2" fill="#fff"/><circle cx="804.900" cy="694" r="2" fill="#fff"/>
    <!-- hangup phone -->
    <path d="M865 683 C860.500 683 856.500 684.500 853.600 687 C853.200 687.400 853.200 688 853.600 688.400 L856.500 691.800 C856.900 692.300 857.600 692.300 858 691.900 C858.900 691.100 859.900 690.500 861 690 C861.400 689.800 861.600 689.400 861.600 689 L861.600 686.600 C862.700 686.300 863.800 686.100 865 686.100 C866.200 686.100 867.300 686.300 868.400 686.600 L868.400 689 C868.400 689.400 868.600 689.800 869 690 C870.100 690.500 871.100 691.100 872 691.900 C872.400 692.300 873.100 692.300 873.500 691.800 L876.400 688.400 C876.800 688 876.800 687.400 876.400 687 C873.500 684.500 869.500 683 865 683 Z" fill="#fff"/>
    <!-- info -->
    <circle cx="1186" cy="688" r="9" fill="none" stroke="#fff" stroke-width="1.900"/>
    <path d="M1186 687 L1186 692.500" stroke="#fff" stroke-width="2"/>
    <circle cx="1186" cy="683.700" r="1.200" fill="#fff"/>
    <!-- people -->
    <g fill="none" stroke="#fff" stroke-width="1.900">
      <circle cx="1230.800" cy="684" r="3.200"/>
      <path d="M1223.700 695 L1223.700 693.600 C1223.700 691 1228 689.800 1230.800 689.800 C1233.600 689.800 1237.900 691 1237.900 693.600 L1237.900 695 Z" stroke-linejoin="round"/>
    </g>
    <path d="M1235.500 679.800 C1241.800 679.600 1241.800 688.400 1235.500 688.200 C1238.300 686 1238.300 682 1235.500 679.800 Z" fill="#fff"/>
    <path d="M1239.500 689.800 C1242.500 690.400 1245 691.600 1245 693.800 L1245 696 L1240.600 696 L1240.600 693.600 C1240.600 692 1240.200 690.800 1239.500 689.800 Z" fill="#fff"/>
    <!-- badge -->
    <circle cx="1245.400" cy="665" r="10.300" fill="#5f6368"/>
    <text x="1245.400" y="669" font-size="11" font-weight="700" fill="#fff" text-anchor="middle" font-family="'Liberation Sans',sans-serif">4</text>
    <!-- chat -->
    <path d="M1273 679 L1291 679 L1291 693 L1277 693 L1273 697 Z" fill="none" stroke="#fff" stroke-width="1.900" stroke-linejoin="round"/>
    <path d="M1276.500 683 L1287.500 683 M1276.500 686 L1287.500 686 M1276.500 689 L1283.500 689" stroke="#fff" stroke-width="1.500"/>
    <!-- activities -->
    <g fill="none" stroke="#fff" stroke-width="1.900" stroke-linejoin="round">
      <path d="M1330.400 679.600 L1334 685.400 L1326.800 685.400 Z"/>
      <rect x="1322.300" y="689.600" width="6" height="6"/>
      <circle cx="1335.600" cy="692.700" r="3.300"/>
    </g>
  </svg>

  <!-- TASKBAR -->
  <div id="taskbar" class="abs"></div>
  <div id="search" class="abs"><span>Поиск</span></div>
  <svg class="abs" style="left:0;top:728px" width="1366" height="40" viewBox="0 728 1366 40">
    <defs>
      <linearGradient id="edg" x1="0" y1="0" x2="1" y2="1"><stop offset="0" stop-color="#35c1f1"/><stop offset="0.500" stop-color="#1b8fe0"/><stop offset="1" stop-color="#0c5aa8"/></linearGradient>
      <linearGradient id="edg2" x1="0" y1="0" x2="1" y2="0"><stop offset="0" stop-color="#2cc3d2"/><stop offset="1" stop-color="#6fdc5a"/></linearGradient>
      <linearGradient id="cl" x1="0" y1="0" x2="0" y2="1"><stop offset="0" stop-color="#f4f8ff"/><stop offset="1" stop-color="#a9c6ee"/></linearGradient>
      <clipPath id="sbx"><rect x="48" y="729" width="288" height="39"/></clipPath>
    </defs>
    <!-- active app bg + underlines -->
    <rect x="681" y="728" width="48" height="40" fill="#4c626f"/>
    <g fill="#76b9ed">
      <rect x="440" y="766" width="40" height="2"/>
      <rect x="681" y="766" width="48" height="2"/>
      <rect x="734" y="766" width="40" height="2"/>
      <rect x="783" y="766" width="40" height="2"/>
    </g>
    <!-- windows logo -->
    <g fill="#fff">
      <path d="M15.800 742.200 L22.700 741.200 L22.700 747.300 L15.800 747.300 Z"/>
      <path d="M23.600 741.100 L32.200 739.800 L32.200 747.300 L23.600 747.300 Z"/>
      <path d="M15.800 748.200 L22.700 748.200 L22.700 754.400 L15.800 753.400 Z"/>
      <path d="M23.600 748.200 L32.200 748.200 L32.200 755.900 L23.600 754.600 Z"/>
    </g>
    <!-- search icon -->
    <circle cx="70.300" cy="745.700" r="4.600" fill="none" stroke="#222" stroke-width="1.300"/>
    <path d="M67 749.200 L60.800 755.300" stroke="#222" stroke-width="1.400"/>
    <!-- search landscape -->
    <g clip-path="url(#sbx)">
      <path d="M268 768 L280 755 L287 750 L294.500 741.500 L301 748 L306 752 L314 750 L322 754 L336 748 L336 768 Z" fill="#6f8f9c"/>
      <path d="M287 750 L294.500 741.500 L301 748 L298 748.500 L295 746.500 L291 750 Z" fill="#d9dfea"/>
      <path d="M294 747 C298 745 304 746 308 748.500 C304 750 298 750 294 747 Z" fill="#e8e6ee"/>
      <path d="M272 768 C278 760 286 754 294 754 C302 754 306 758 312 760 L336 752 L336 768 Z" fill="#4f8a3a"/>
      <path d="M300 768 C306 760 316 756 324 755 L336 751 L336 768 Z" fill="#3f7a2e"/>
      <path d="M262 768 C266 755 268 748 270 742" fill="none" stroke="#8a5a3a" stroke-width="1.800"/>
      <ellipse cx="264" cy="745" rx="3.600" ry="4.600" transform="rotate(20 264 745)" fill="#5fa82a"/>
      <ellipse cx="276" cy="741" rx="5.500" ry="2.800" transform="rotate(15 276 741)" fill="#4f9a24"/>
      <ellipse cx="276" cy="752" rx="5" ry="3.400" transform="rotate(-20 276 752)" fill="#6bb52e"/>
      <path d="M333 768 C333 755 332 745 330 738 M331 748 C326 744 320 742 312 743 M330 740 C326 737 322 736 318 737" fill="none" stroke="#a8714a" stroke-width="1.800"/>
      <ellipse cx="309" cy="741" rx="3.600" ry="2.800" fill="#5fa82a"/>
      <ellipse cx="316" cy="747" rx="3" ry="2.400" fill="#4f9a24"/>
      <ellipse cx="320" cy="737" rx="3.600" ry="2.600" fill="#6bb52e"/>
      <ellipse cx="326" cy="733" rx="3" ry="2.400" fill="#5fa82a"/>
      <ellipse cx="332" cy="735" rx="2.600" ry="3" fill="#4f9a24"/>
      <ellipse cx="324" cy="742" rx="2.600" ry="2" fill="#7cc23a"/>
      <circle cx="281" cy="764" r="5" fill="#9ac43c"/><circle cx="288" cy="761" r="4.500" fill="#a8cf45"/><circle cx="295" cy="765" r="4.500" fill="#8fba35"/><circle cx="301" cy="766" r="4" fill="#a0c940"/>
    </g>
    <!-- task view -->
    <g fill="none" stroke="#fff" stroke-width="1.200">
      <path d="M352.500 740 L352.500 742 L362.500 742 L362.500 740"/>
      <rect x="352.500" y="744.700" width="10" height="5.600"/>
      <path d="M352.500 755 L352.500 753 L362.500 753 L362.500 755"/>
      <path d="M366.500 740 L366.500 742.800 M366.500 747.800 L366.500 755"/>
    </g>
    <rect x="365" y="744.100" width="3" height="2.800" fill="#fff"/>
    <!-- edge -->
    <g>
      <circle cx="411.300" cy="748" r="12.200" fill="url(#edg)"/>
      <path d="M399.500 745 C401 738 407 735.500 412 735.800 C419 736.200 423.800 741.500 423.500 747.500 C423.300 751 420.500 753 417.500 753 C414.500 753 413 751.500 413.500 749.500 C414 747.500 415 746.500 413.500 744.500 C411.500 742 406 741.500 399.500 745 Z" fill="url(#edg2)"/>
      <path d="M405 749 C405 745 408.500 743 411.500 743.500 C409.500 745 409 748 410.500 751 C412 754 416 756 420.500 754.500 C417.500 758.500 412 759.500 408.500 757 C405.500 755 405 752 405 749 Z" fill="#0d4f9e"/>
    </g>
    <!-- explorer -->
    <g>
      <path d="M449 741 C449 739.600 449.800 738.800 451 738.800 L457 738.800 L459 741 L469.300 741 C470 741 470.500 741.500 470.500 742.200 L470.500 755.500 L449 755.500 Z" fill="#f5b92e"/>
      <rect x="449" y="743" width="21.500" height="13.600" rx="0.800" fill="#fcd25a"/>
      <path d="M452.500 756.600 L452.500 750 L467 750 L467 756.600 L463.500 756.600 L463.500 753.200 L456 753.200 L456 756.600 Z" fill="#3a8fe0"/>
    </g>
    <!-- store -->
    <g>
      <path d="M503.500 741.500 L503.500 739.500 C503.500 738.300 504.300 737.500 505.500 737.500 L511.500 737.500 C512.700 737.500 513.500 738.300 513.500 739.500 L513.500 741.500" fill="none" stroke="#3aa0e8" stroke-width="1.700"/>
      <path d="M497 741.500 L520 741.500 L520 756.500 C520 758.300 518.800 759.500 517 759.500 L500 759.500 C498.200 759.500 497 758.300 497 756.500 Z" fill="#f3f3f3"/>
      <rect x="504" y="745.600" width="4" height="4" fill="#f25022"/><rect x="509" y="745.600" width="4" height="4" fill="#7fba00"/>
      <rect x="504" y="750.600" width="4" height="4" fill="#00a4ef"/><rect x="509" y="750.600" width="4" height="4" fill="#ffb900"/>
    </g>
    <!-- mail -->
    <g>
      <path d="M546 745.200 L557.800 736.700 L570.400 745.200 Z" fill="#1565c0"/>
      <rect x="546" y="745" width="24.400" height="13.600" fill="#2b9bf0"/>
      <path d="M546 745 L557.800 752.800 L546 758.600 Z" fill="#1e88e5"/>
      <path d="M546 758.600 L557.800 752.800 L563 758.600 Z" fill="#2490ea"/>
      <path d="M548 745 L567.400 745 L557.800 752.800 Z" fill="#f5f7fb"/>
    </g>
    <!-- pc -->
    <g>
      <path d="M603.500 738 L617.500 741.500 L617.500 753 L603.500 749.500 Z" fill="#4fb4f5"/>
      <path d="M603.500 738 L602.500 738.500 L602.500 750 L603.500 749.500 Z" fill="#2f7fc0"/>
      <path d="M609 751 L613 752 L613.500 755 L608 753.800 Z" fill="#c9ced6"/>
      <path d="M595.500 753.500 L605 750.500 L612.500 755 L603 758.200 Z" fill="#e3e6ea"/>
      <path d="M595.500 753.500 L603 758.200 L603 759 L595.500 754.300 Z" fill="#aab0ba"/>
    </g>
    <!-- chrome x2 -->
    <g id="chr">
      <circle cx="656" cy="748" r="12.200" fill="#fff"/>
      <path d="M656 748 L645.430 741.900 A12.200 12.200 0 0 1 666.570 741.900 Z" fill="#ea4335"/>
      <path d="M645.430 741.900 A12.200 12.200 0 0 1 666.570 741.900 L656 741.900 Z" fill="#ea4335"/>
      <path d="M656 748 L666.570 741.900 A12.200 12.200 0 0 1 656 760.200 Z" fill="#fbbc04"/>
      <path d="M656 748 L656 760.200 A12.200 12.200 0 0 1 645.430 741.900 Z" fill="#34a853"/>
      <circle cx="656" cy="748" r="5.800" fill="#fff"/>
      <circle cx="656" cy="748" r="4.600" fill="#1a73e8"/>
    </g>
    <use href="#chr" x="48.900" y="0"/>
    <circle cx="661.800" cy="753.800" r="5.800" fill="#c2185b"/>
    <text x="661.800" y="756.500" font-size="7.500" fill="#fff" text-anchor="middle" font-family="'Liberation Sans',sans-serif">K</text>
    <circle cx="710.600" cy="753.800" r="6" fill="#5c6bc0"/>
    <text x="710.600" y="756.600" font-size="8" fill="#fff" text-anchor="middle" font-family="'Liberation Sans',sans-serif">C</text>
    <!-- viber -->
    <g>
      <path d="M746 738 C750 735.800 758 735.800 762 738 C765.500 740 765.800 749 763.500 752.500 C761.500 755.500 755 756 751.500 755.500 L748 759.500 L748 754.500 C744 753 742.600 749 742.800 745.500 C743 742 743.500 739.500 746 738 Z" fill="#7360f2"/>
      <path d="M744.500 739.500 C748 737.300 759 737 762.500 739.300" fill="none" stroke="#d9d3ff" stroke-width="1"/>
      <path d="M749.500 741.500 C748.500 742 748.300 743 748.800 744.200 C750 747 752 749.300 754.800 750.600 C756 751.100 757 750.800 757.500 749.800 L756 748 L754.500 748.500 C753.200 747.800 752.200 746.700 751.500 745.300 L752.200 743.800 Z" fill="#fff"/>
      <rect x="752.300" y="748" width="16" height="12.800" rx="2.500" fill="#e8382f"/>
      <text x="760.300" y="758.200" font-size="10" fill="#fff" text-anchor="middle" font-family="'Liberation Sans',sans-serif">26</text>
    </g>
    <!-- settings gear -->
    <g>
      <circle cx="802.600" cy="747.600" r="5.600" fill="none" stroke="#fff" stroke-width="3"/>
      <g stroke="#fff" stroke-width="3.400">
        <path d="M802.600 738.400 L802.600 741.500 M802.600 753.700 L802.600 756.800 M793.400 747.600 L796.500 747.600 M808.700 747.600 L811.800 747.600"/>
        <path d="M796.100 741.100 L798.300 743.300 M806.900 751.900 L809.100 754.100 M796.100 754.100 L798.300 751.900 M806.900 743.300 L809.100 741.100"/>
      </g>
    </g>
    <!-- weather cloud -->
    <path d="M927 755.700 C923.500 755.700 921.800 753 922 750.500 C922.300 748 924.500 746.300 927 746.500 C927.500 742.500 931 739.300 935 739.300 C938.500 739.300 941.300 741.300 942.300 744.500 C944.800 744.800 946.200 747 946.100 749.800 C946 753 943.500 755.700 940.500 755.700 Z" fill="url(#cl)"/>
    <!-- tray -->
    <path d="M1002 751 L1007 746 L1012 751" fill="none" stroke="#fff" stroke-width="1.300"/>
    <circle cx="1030.700" cy="748" r="8" fill="#c9d21a"/>
    <circle cx="1030.700" cy="748" r="5.600" fill="#2f9a2f"/>
    <path d="M1027 748 L1034.400 748 M1030.700 744.300 L1030.700 751.700" stroke="#f0e92a" stroke-width="2.200"/>
    <path d="M1050 752.500 C1047 752.500 1046.200 749 1049 748 C1049 744.500 1053.500 743.500 1055 746 C1056.500 744.800 1059.500 745.500 1059.800 748 C1063 748 1063.800 752.500 1060.500 752.500 Z" fill="#e8eaee"/>
    <g fill="none" stroke="#fff" stroke-width="1.200">
      <rect x="1074.500" y="744" width="6.500" height="8" rx="1.500"/>
      <path d="M1081.500 747 L1084 745 L1084 751 L1081.500 749 Z M1075 741.500 C1076.500 740.300 1079 740.300 1080.500 741.500 M1075 754.500 C1076.500 755.700 1079 755.700 1080.500 754.500"/>
    </g>
    <rect x="1099.800" y="740.500" width="5" height="10" rx="2.500" fill="#fff"/>
    <path d="M1097.500 747.500 C1097.500 754 1107.100 754 1107.100 747.500 M1102.300 752.500 L1102.300 756 M1099.500 756 L1105.100 756" fill="none" stroke="#fff" stroke-width="1.100"/>
    <g fill="none" stroke="#fff" stroke-width="1.200">
      <path d="M1120 742.500 L1133.500 741 L1133.500 752.500 L1120 754 Z"/>
      <path d="M1124 749.500 C1124 746 1128 745 1129.500 747 M1129.800 744.800 L1129.800 747.300 L1127.300 747.300"/>
    </g>
    <circle cx="1132.300" cy="753.500" r="3.300" fill="#f7901e"/>
    <g fill="none" stroke="#fff" stroke-width="1.200">
      <rect x="1148" y="744.500" width="10.500" height="7"/>
      <path d="M1158.500 746.500 L1160 746.500 L1160 749.500 L1158.500 749.500"/>
      <path d="M1142.500 745.500 L1142.500 743 M1145 745.500 L1145 743 M1141.500 745.500 L1146 745.500 L1146 748 C1146 750 1141.500 750 1141.500 748 Z M1143.800 750 L1143.800 753 L1147 753"/>
    </g>
    <rect x="1149.500" y="746" width="4" height="4" fill="#fff"/>
    <g fill="none" stroke-linecap="round">
      <path d="M1170 754 C1170 746.500 1176 741.500 1183 741.500" stroke="#8c99ab" stroke-width="1.300"/>
      <path d="M1173.500 754.500 C1173.500 749 1178 745.300 1183 745.300" stroke="#fff" stroke-width="1.300"/>
      <path d="M1177 755 C1177 751.500 1180 749 1183 749" stroke="#fff" stroke-width="1.300"/>
    </g>
    <circle cx="1181.500" cy="754" r="1.500" fill="#fff"/>
    <g fill="none" stroke="#fff" stroke-width="1.200">
      <path d="M1191 745.500 L1193.500 745.500 L1197 742 L1197 754 L1193.500 750.500 L1191 750.500 Z"/>
      <path d="M1199.500 745 C1201 746.500 1201 749.500 1199.500 751"/>
      <path d="M1201.800 742.800 C1204.500 745.500 1204.500 750.500 1201.800 753.200" stroke="#8c99ab"/>
      <path d="M1204 740.800 C1208 744.500 1208 751.500 1204 755.200" stroke="#5f6f85"/>
    </g>
    <!-- notification -->
    <path d="M1325.500 740.500 L1340.500 740.500 L1340.500 752.500 L1329.500 752.500 L1325.500 756.500 Z" fill="#fff"/>
    <path d="M1328 744 L1338 744 M1328 746.800 L1338 746.800 M1328 749.600 L1335 749.600" stroke="#182848" stroke-width="1"/>
    <circle cx="1340.600" cy="755.400" r="7.300" fill="#2a2d36" stroke="#9aa0ad" stroke-width="1.100"/>
    <text x="1340.800" y="759.300" font-size="10.500" font-weight="700" fill="#fff" text-anchor="middle" font-family="'Liberation Sans',sans-serif">1</text>
    <path d="M1361.500 728 L1361.500 768" stroke="#7a8797" stroke-width="1"/>
  </svg>
  <div class="abs tb" style="left:954.500px;top:738px;font-size:14.200px;line-height:20px;transform:scaleX(0.880);transform-origin:0 0">7°C</div>
  <div class="abs tb" style="left:1217px;top:739px;font-size:12.300px;line-height:18px;transform:scaleX(0.830);transform-origin:0 0">ENG</div>
  <div class="abs tb" style="left:1250px;top:729.500px;width:60px;text-align:center;font-size:12.300px;line-height:18px;transform:scaleX(0.870)">14:45</div>
  <div class="abs tb" style="left:1245px;top:747.500px;width:70px;text-align:center;font-size:12.300px;line-height:18px;transform:scaleX(0.870)">04.03.2024</div>
</div>
</body>
</html>
